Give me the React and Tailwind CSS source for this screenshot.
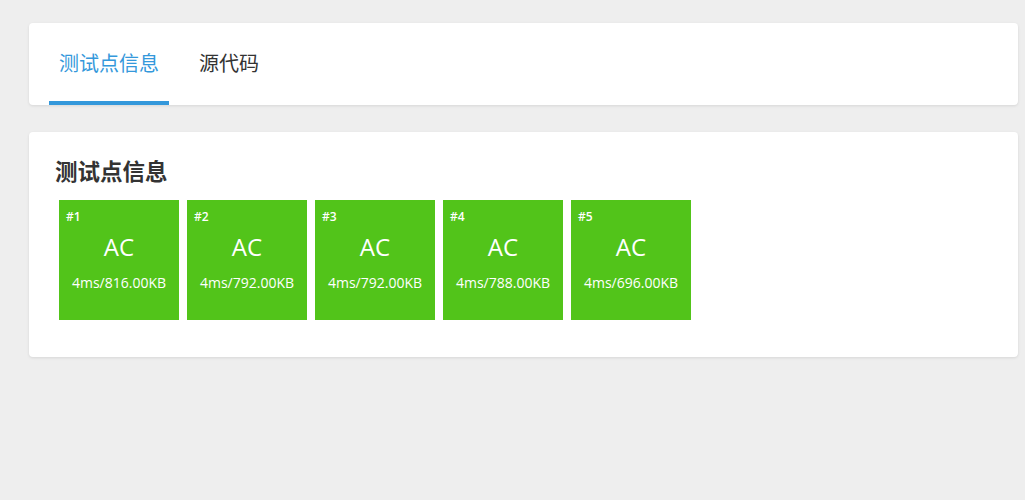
import React from "react";

const cases = [
  { id: 1, time: "4ms", mem: "816.00KB" },
  { id: 2, time: "4ms", mem: "792.00KB" },
  { id: 3, time: "4ms", mem: "792.00KB" },
  { id: 4, time: "4ms", mem: "788.00KB" },
  { id: 5, time: "4ms", mem: "696.00KB" },
];

const font = { fontFamily: '"Open Sans", "Noto Sans CJK SC", sans-serif' };

export default function App() {
  return (
    <div
      className="min-h-screen w-full bg-[#eeeeee] pt-[23px] pl-[29px] pr-[7px]"
      style={font}
    >
      <div className="h-[82px] rounded-[4px] bg-white shadow-[0_1px_3px_rgba(0,0,0,0.1)] px-[20px] flex gap-[20px]">
        <div className="relative flex items-center px-[10px] text-[20px] text-[#3498db]">
          测试点信息
          <div className="absolute left-0 right-0 bottom-0 h-[4px] bg-[#3498db]" />
        </div>
        <div className="flex items-center px-[10px] text-[20px] text-[#333333]">
          源代码
        </div>
      </div>

      <div className="mt-[27px] rounded-[4px] bg-white shadow-[0_1px_3px_rgba(0,0,0,0.1)] pt-[25px] pb-[33px] px-[26px]">
        <div className="text-[22.5px] font-bold leading-[30px] text-[#333333] mb-[9px]">
          测试点信息
        </div>
        <div className="flex flex-wrap">
          {cases.map((c) => (
            <div
              key={c.id}
              className="m-[4px] w-[120px] h-[120px] bg-[#52c41a] text-white flex flex-col"
            >
              <div className="pt-[9px] pl-[7px] text-[12px] leading-[16px] font-semibold">
                #{c.id}
              </div>
              <div className="mt-[6px] text-center text-[24px] leading-[32px]">
                AC
              </div>
              <div className="mt-[10px] text-center text-[14px] leading-[20px]">
                {c.time}/{c.mem}
              </div>
            </div>
          ))}
        </div>
      </div>
    </div>
  );
}
